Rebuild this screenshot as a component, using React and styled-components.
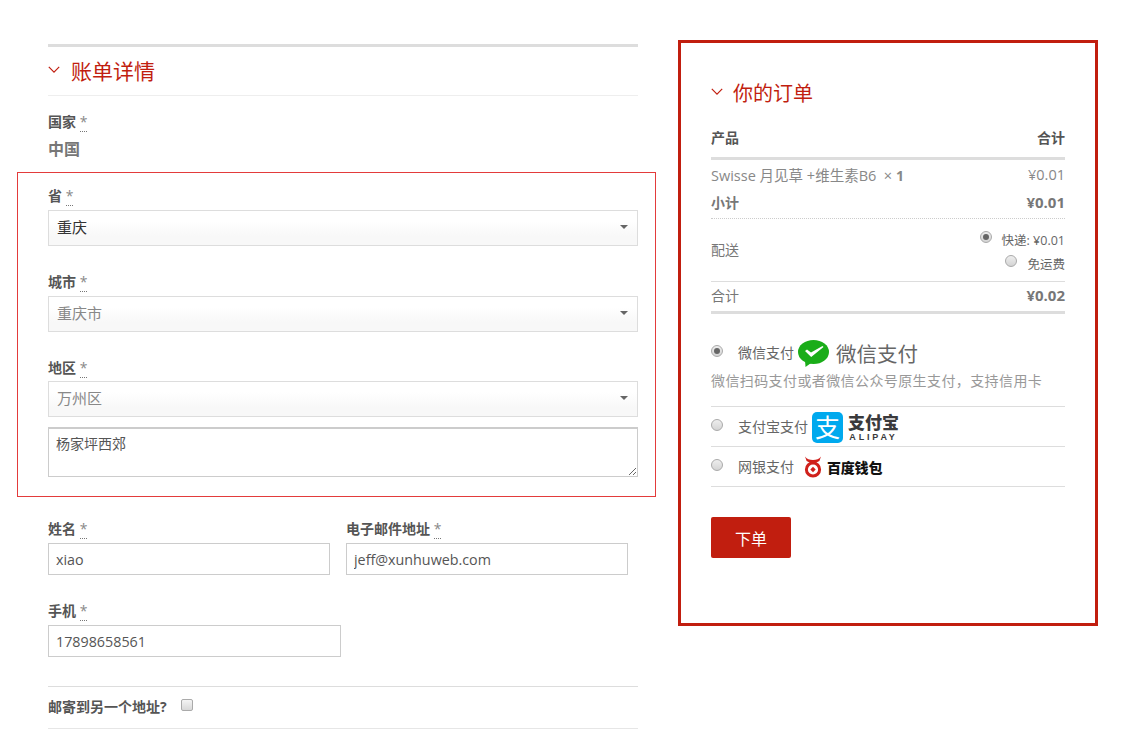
import React from 'react';
import styled, { createGlobalStyle } from 'styled-components';

const RED = '#c11e0f';
const FONT = `"Open Sans", "Noto Sans CJK SC", sans-serif`;

const GlobalStyle = createGlobalStyle`
  html, body {
    margin: 0;
    padding: 0;
    background: #fff;
    font-family: ${FONT};
    color: #777;
  }
  * { box-sizing: border-box; }
`;

const Page = styled.div`
  display: flex;
  align-items: flex-start;
  width: 1128px;
  height: 730px;
  padding: 40px 0 0 48px;
  overflow: hidden;
`;

const Billing = styled.section`
  width: 590px;
  padding-top: 4px;
`;

const TopBar = styled.div`
  height: 3px;
  background: #ddd;
`;

const BillingHeading = styled.h2`
  display: flex;
  align-items: center;
  gap: 11px;
  height: 49px;
  margin: 0;
  padding-bottom: 2px;
  border-bottom: 1px solid #eee;
  color: ${RED};
  font-size: 21px;
  font-weight: 400;
`;

const Label = styled.label`
  display: block;
  height: 20px;
  color: #555;
  font-size: 14px;
  font-weight: 700;
  line-height: 20px;
`;

const Star = styled.abbr`
  color: #888;
  font-weight: 400;
  text-decoration: none;
  border-bottom: 1px dotted #777;
`;

const Country = styled.div`
  margin-top: 16px;
`;

const CountryValue = styled.div`
  margin-top: 7px;
  padding-bottom: 1px;
  color: #777;
  font-size: 16px;
  font-weight: 700;
  line-height: 20px;
`;

const AddressBox = styled.div`
  width: 639px;
  margin: 12px 0 0 -31px;
  padding: 13px 17px 19px 30px;
  border: 1px solid #e33b3b;
`;

const Field = styled.div`
  margin-top: ${p => p.$top || 0}px;
`;

const SelectBox = styled.div`
  display: flex;
  align-items: center;
  justify-content: space-between;
  height: 36px;
  margin-top: ${p => p.$gap ?? 4}px;
  padding: 0 9px 3px 8px;
  border: 1px solid #ddd;
  background: linear-gradient(#fff 30%, #f8f8f8 75%);
  color: ${p => (p.$muted ? '#888' : '#333')};
  font-size: 15px;
`;

const Caret = styled.span`
  width: 0;
  height: 0;
  border-left: 4px solid transparent;
  border-right: 4px solid transparent;
  border-top: 4px solid #666;
`;

const Note = styled.textarea`
  display: block;
  width: 100%;
  height: 50px;
  margin: 10px 0 0;
  padding: 5px 7px;
  border: 1px solid #ccc;
  border-top-width: 2px;
  border-radius: 0;
  outline: none;
  background: #fff;
  color: #555;
  font-family: ${FONT};
  font-size: 14px;
  line-height: 20px;
`;

const NameRow = styled.div`
  display: flex;
  gap: 16px;
  margin-top: 22px;
`;

const NameColumn = styled.div`
  width: 282px;
`;

const TextInput = styled.input`
  display: block;
  width: ${p => p.$width || 282}px;
  height: 32px;
  margin-top: 4px;
  padding: 0 7px;
  border: 1px solid #ccc;
  border-radius: 0;
  outline: none;
  color: #555;
  font-family: ${FONT};
  font-size: 14.3px;
`;

const ShipRow = styled.div`
  display: flex;
  align-items: center;
  gap: 14px;
  height: 43px;
  margin-top: 29px;
  padding-bottom: 3px;
  border-top: 1px solid #ddd;
  border-bottom: 1px solid #e6e6e6;
  color: #555;
  font-size: 14px;
  font-weight: 700;
`;

const CheckBox = styled.span`
  width: 12px;
  height: 12px;
  margin-top: -2px;
  border: 1px solid #aaa;
  border-radius: 2px;
  background: linear-gradient(#f4f4f4, #d8d8d8);
`;

const Order = styled.aside`
  width: 420px;
  height: 586px;
  margin-left: 40px;
  padding: 0 30px;
  border: 3px solid ${RED};
`;

const OrderHeading = styled.h3`
  display: flex;
  align-items: center;
  gap: 10px;
  height: 30px;
  margin: 34px 0 0;
  color: ${RED};
  font-size: 20px;
  font-weight: 400;
`;

const Line = styled.div`
  display: flex;
  align-items: center;
  justify-content: space-between;
  height: ${p => p.$height}px;
  padding-top: ${p => p.$pad || 0}px;
  padding-bottom: ${p => p.$padBottom || 0}px;
  border-bottom: ${p => p.$rule || 'none'};
  color: ${p => p.$color || '#777'};
  font-size: ${p => p.$size || 14}px;
`;

const Bold = styled.span`
  font-weight: 700;
  font-size: ${p => p.$size || 14}px;
`;

const Methods = styled.div`
  display: flex;
  flex-direction: column;
  align-items: flex-end;
  gap: 9px;
  padding-top: 5px;
  font-size: 12.5px;
  color: #666;
`;

const Method = styled.div`
  display: flex;
  align-items: center;
  gap: 10px;
  height: 15px;
`;

const Radio = styled.span`
  display: flex;
  align-items: center;
  justify-content: center;
  flex: none;
  width: 12px;
  height: 12px;
  margin-top: -5px;
  border: 1px solid #aaa;
  border-radius: 50%;
  background: linear-gradient(#eee, #d4d4d4);
  &::after {
    content: '';
    display: ${p => (p.$on ? 'block' : 'none')};
    width: 6px;
    height: 6px;
    border-radius: 50%;
    background: #666;
  }
`;

const Pay = styled.div`
  height: ${p => p.$height}px;
  padding-top: ${p => p.$pad}px;
  border-bottom: 1px solid #ddd;
`;

const PayRow = styled.div`
  display: flex;
  align-items: center;
  height: ${p => p.$height}px;
  color: #666;
  font-size: 14px;
`;

const PayName = styled.span`
  margin-left: 15px;
  padding-bottom: 3px;
`;

const WechatLogoWrap = styled.span`
  display: flex;
  margin-left: 4px;
`;

const WechatText = styled.span`
  margin-left: 7px;
  color: #666;
  font-size: 20.5px;
`;

const PayNote = styled.p`
  margin: 3px 0 0;
  color: #999;
  font-size: 14px;
  letter-spacing: 0.4px;
  line-height: 20px;
  white-space: nowrap;
`;

const AlipayMark = styled.div`
  display: flex;
  align-items: center;
  margin-left: 4px;
  gap: 5px;
`;

const AlipayTile = styled.span`
  display: flex;
  align-items: center;
  justify-content: center;
  width: 31px;
  height: 31px;
  border-radius: 5px;
  background: #00a9ee;
  color: #fff;
  font-size: 25px;
  line-height: 1;
`;

const AlipayWords = styled.span`
  display: flex;
  flex-direction: column;
  align-items: center;
  color: #3a3a3c;
`;

const AlipayCn = styled.span`
  font-size: 17px;
  font-weight: 900;
  line-height: 19px;
`;

const AlipayEn = styled.span`
  font-family: "Liberation Sans", sans-serif;
  font-size: 9px;
  font-weight: 700;
  letter-spacing: 2.8px;
  line-height: 10px;
`;

const BaiduMark = styled.div`
  display: flex;
  align-items: center;
  gap: 4px;
  margin-left: 9px;
`;

const BaiduText = styled.span`
  color: #111;
  font-size: 14px;
  font-weight: 900;
  letter-spacing: -0.2px;
`;

const PlaceOrder = styled.button`
  display: block;
  width: 80px;
  height: 41px;
  margin-top: 30px;
  border: none;
  border-radius: 2px;
  background: ${RED};
  color: #fff;
  font-family: ${FONT};
  font-size: 16px;
`;

const Chevron = ({ size = 12 }) => (
  <svg width={size} height={size * 0.6} viewBox="0 0 12 7" fill="none">
    <path d="M.8.8 6 6 11.2.8" stroke={RED} strokeWidth="1.2" />
  </svg>
);

const WechatLogo = () => (
  <svg width="31" height="27" viewBox="0 0 31 27">
    <ellipse cx="15.5" cy="12" rx="15.5" ry="12" fill="#1aad19" />
    <path d="M7 20 7.5 27l7-5z" fill="#1aad19" />
    <path d="M7 11l2-1.6 4 3L24.5 6 25.5 7 13.2 17z" fill="#fff" />
  </svg>
);

const BaiduLogo = () => (
  <svg width="20" height="22" viewBox="0 0 20 22">
    <path d="M2 .5c2 2.6 4.5 3.5 8 3.5s6-.9 8-3.5l-1.6 4.4c-1.8 1.3-4 1.9-6.4 1.9s-4.6-.6-6.4-1.9z" fill="#d0211c" />
    <circle cx="10" cy="13.5" r="6.6" fill="none" stroke="#d0211c" strokeWidth="3" />
    <path d="M10 10.8 12.7 13.5 10 16.2 7.3 13.5z" fill="#d0211c" />
  </svg>
);

const Required = () => <Star title="required">*</Star>;

const AddressSelect = ({ label, value, muted, gap, top }) => (
  <Field $top={top}>
    <Label>{label} <Required /></Label>
    <SelectBox $muted={muted} $gap={gap}>
      {value}
      <Caret />
    </SelectBox>
  </Field>
);

export default function App() {
  return (
    <>
      <GlobalStyle />
      <Page>
        <Billing>
          <TopBar />
          <BillingHeading><Chevron />账单详情</BillingHeading>
          <Country>
            <Label>国家 <Required /></Label>
            <CountryValue>中国</CountryValue>
          </Country>
          <AddressBox>
            <AddressSelect label="省" value="重庆" />
            <AddressSelect label="城市" value="重庆市" muted top={26} />
            <AddressSelect label="地区" value="万州区" muted top={26} gap={3} />
            <Note readOnly value="杨家坪西郊" />
          </AddressBox>
          <NameRow>
            <NameColumn>
              <Label>姓名 <Required /></Label>
              <TextInput readOnly value="xiao" />
            </NameColumn>
            <NameColumn>
              <Label>电子邮件地址 <Required /></Label>
              <TextInput readOnly value="jeff@xunhuweb.com" />
            </NameColumn>
          </NameRow>
          <Field $top={26}>
            <Label>手机 <Required /></Label>
            <TextInput readOnly $width={293} value="17898658561" />
          </Field>
          <ShipRow>邮寄到另一个地址?<CheckBox /></ShipRow>
        </Billing>

        <Order>
          <OrderHeading><Chevron />你的订单</OrderHeading>
          <Line $height={53} $pad={10} $color="#555" $rule="3px solid #ddd">
            <Bold>产品</Bold>
            <Bold>合计</Bold>
          </Line>
          <Line $height={29} $size={14.5} $color="#888">
            <span>Swisse 月见草 +维生素B6 &nbsp;× <Bold>1</Bold></span>
            <span>¥0.01</span>
          </Line>
          <Line $height={30} $padBottom={3} $rule="1px dotted #ccc">
            <Bold>小计</Bold>
            <Bold $size={15}>¥0.01</Bold>
          </Line>
          <Line $height={63} $padBottom={3} $rule="1px solid #ddd">
            <span>配送</span>
            <Methods>
              <Method><Radio $on />快递: ¥0.01</Method>
              <Method><Radio />免运费</Method>
            </Methods>
          </Line>
          <Line $height={32} $padBottom={3} $rule="3px solid #ddd">
            <span>合计</span>
            <Bold $size={15}>¥0.02</Bold>
          </Line>

          <Pay $height={93} $pad={24}>
            <PayRow $height={30}>
              <Radio $on />
              <PayName>微信支付</PayName>
              <WechatLogoWrap><WechatLogo /></WechatLogoWrap>
              <WechatText>微信支付</WechatText>
            </PayRow>
            <PayNote>微信扫码支付或者微信公众号原生支付，支持信用卡</PayNote>
          </Pay>
          <Pay $height={40} $pad={4}>
            <PayRow $height={32}>
              <Radio />
              <PayName>支付宝支付</PayName>
              <AlipayMark>
                <AlipayTile>支</AlipayTile>
                <AlipayWords>
                  <AlipayCn>支付宝</AlipayCn>
                  <AlipayEn>ALIPAY</AlipayEn>
                </AlipayWords>
              </AlipayMark>
            </PayRow>
          </Pay>
          <Pay $height={40} $pad={9}>
            <PayRow $height={22}>
              <Radio />
              <PayName>网银支付</PayName>
              <BaiduMark>
                <BaiduLogo />
                <BaiduText>百度钱包</BaiduText>
              </BaiduMark>
            </PayRow>
          </Pay>
          <PlaceOrder>下单</PlaceOrder>
        </Order>
      </Page>
    </>
  );
}
